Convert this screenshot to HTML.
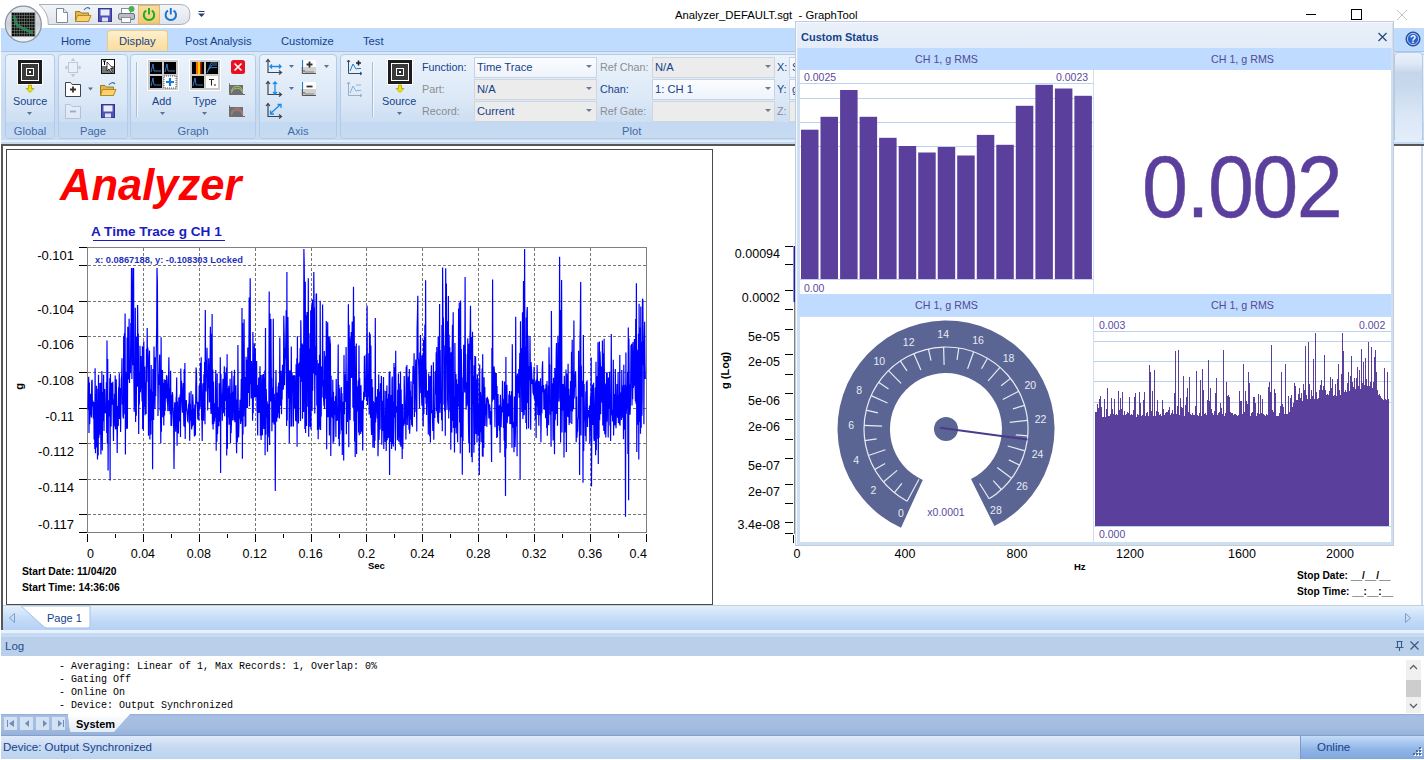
<!DOCTYPE html>
<html><head><meta charset="utf-8">
<style>
*{box-sizing:border-box}
html,body{margin:0;padding:0}
body{width:1426px;height:760px;overflow:hidden;position:relative;background:#fff;font-family:"Liberation Sans",sans-serif;color:#000}
.a{position:absolute}
.t{position:absolute;white-space:pre;line-height:1}
/* ribbon */
.tabstrip{left:1px;top:28px;width:1423px;height:24px;background:#bfdbfd}
.tab{color:#15428b;font-size:11.2px;top:36px}
.ribbon{left:1px;top:51px;width:1423px;height:93px;background:linear-gradient(#dbe8f7 0%,#c8daf0 60%,#c7dbf1 100%);border-top:1px solid #a7c3e6}
.grp{border:1px solid #b2cbe8;border-radius:4px;background:linear-gradient(#ebf3fc 0%,#dde9f7 50%,#d1e1f4 72%,#c9dcf2 100%);}
.grp .lbl{position:absolute;left:0;right:0;bottom:0;height:16px;background:linear-gradient(#c3d9f1,#c7dcf3);color:#4169a6;font-size:11.2px;text-align:center;line-height:18px;border-radius:0 0 3px 3px}
.rb{color:#15428b;font-size:11.2px}
.gr{color:#8d8d8d;font-size:11.2px}
.combo{height:21px;border:1px solid #c4d3e5;background:linear-gradient(#fbfcfe,#eef4fb);font-size:11.2px;color:#15428b;padding:3px 0 0 2px;white-space:pre}
.combo.g{background:#ececec;border-color:#cfd6de}
.dd{position:absolute;width:0;height:0;border-left:3px solid transparent;border-right:3px solid transparent;border-top:3px solid #6b7c91}
/* doc */
.doc{left:6px;top:149px;width:707px;height:456px;border:1px solid #4a4a4a;background:#fff}
.ax{font-size:12.3px;color:#000}
/* custom status */
.cs-hdr{background:#bfdbff;color:#524a94;font-size:10.7px;text-align:center;line-height:22px}
.purple{color:#5b3f9c}
</style></head><body>

<!-- title bar -->
<div class="t" style="left:675px;top:10px;font-size:11.3px;color:#000">Analyzer_DEFAULT.sgt  - GraphTool</div>
<!-- window buttons -->
<div class="a" style="left:1306px;top:14px;width:10px;height:1px;background:#000"></div>
<div class="a" style="left:1351px;top:9px;width:11px;height:11px;border:1px solid #000"></div>
<svg class="a" style="left:1396px;top:9px" width="12" height="12"><path d="M1 1L11 11M11 1L1 11" stroke="#c4c4c4" stroke-width="1"/></svg>

<!-- tab strip -->
<div class="a tabstrip"></div>
<div class="a" style="left:107px;top:30px;width:61px;height:23px;border:1px solid #e7c988;border-bottom:none;border-radius:4px 4px 0 0;background:linear-gradient(#fdf0cf,#fbe3a8 60%,#f5dba6)"></div>
<div class="t tab" style="left:61px">Home</div>
<div class="t tab" style="left:119px">Display</div>
<div class="t tab" style="left:185px">Post Analysis</div>
<div class="t tab" style="left:281px">Customize</div>
<div class="t tab" style="left:363px">Test</div>

<!-- ribbon body -->
<div class="a ribbon"></div>
<div class="a grp" style="left:5px;top:54px;width:50px;height:85px"><div class="lbl">Global</div></div>
<div class="a grp" style="left:58px;top:54px;width:70px;height:85px"><div class="lbl">Page</div></div>
<div class="a grp" style="left:130px;top:54px;width:126px;height:85px"><div class="lbl">Graph</div></div>
<div class="a grp" style="left:259px;top:54px;width:78px;height:85px"><div class="lbl">Axis</div></div>
<div class="a grp" style="left:340px;top:54px;width:1100px;height:85px"><div class="lbl" style="text-align:left;padding-left:281px">Plot</div></div>

<!-- app orb + QAT -->
<svg class="a" style="left:0;top:0" width="220" height="52">
  <defs>
    <linearGradient id="qg" x1="0" y1="0" x2="0" y2="1"><stop offset="0" stop-color="#f3f5f8"/><stop offset="1" stop-color="#dfe4eb"/></linearGradient>
    <linearGradient id="orb" x1="0" y1="0" x2="0" y2="1"><stop offset="0" stop-color="#e9edf2"/><stop offset="0.5" stop-color="#c9d0d9"/><stop offset="1" stop-color="#f4f6f9"/></linearGradient>
    <linearGradient id="hl" x1="0" y1="0" x2="0" y2="1"><stop offset="0" stop-color="#fbdca0"/><stop offset="1" stop-color="#f2c77a"/></linearGradient>
  </defs>
  <path d="M39 4.5H180Q190 4.5 190 14.5Q190 24.5 180 24.5H48.3A25 25 0 0 0 39 4.5Z" fill="url(#qg)" stroke="#a9b1bc"/>
  <rect x="138.5" y="5.5" width="21" height="18.5" fill="url(#hl)" stroke="#e0b96a"/>
  <!-- new doc -->
  <path d="M56.5 8.5H63.5L67.5 12.5V22.5H56.5Z" fill="#fff" stroke="#7c8aa0"/>
  <path d="M63.5 8.5V12.5H67.5" fill="#e4e8ef" stroke="#7c8aa0"/>
  <!-- open folder -->
  <path d="M75.5 11.5H80L81.5 13H88.5V21.5H75.5Z" fill="#e6b548" stroke="#9b7a2a"/>
  <path d="M77.5 15.5H91L88.5 21.5H75.5Z" fill="#fbd36a" stroke="#b08a30"/>
  <path d="M84 10Q87 6 90 9" fill="none" stroke="#3b6fb5" stroke-width="1.2"/>
  <!-- save -->
  <rect x="98.5" y="8.5" width="13" height="13" fill="#5052b8" stroke="#35378a"/>
  <rect x="100.5" y="9.5" width="9" height="6" fill="#e8ecf8"/>
  <rect x="102" y="17.5" width="6" height="4" fill="#dfe3f3"/>
  <!-- print -->
  <rect x="121.5" y="8.5" width="9" height="5" fill="#fff" stroke="#8a8f98"/>
  <rect x="118.5" y="13.5" width="16" height="6" rx="1.5" fill="#b8bdc6" stroke="#6c717a"/>
  <rect x="121.5" y="17.5" width="9" height="5" fill="#fff" stroke="#8a8f98"/>
  <circle cx="131.5" cy="9" r="3" fill="#4caf50"/>
  <!-- power green -->
  <path d="M146.2 10.5A5.2 5.2 0 1 0 151.8 10.5" fill="none" stroke="#19b01a" stroke-width="2"/>
  <path d="M149 8V14.5" stroke="#19b01a" stroke-width="1.9"/>
  <!-- power blue -->
  <path d="M168 10.5A5.2 5.2 0 1 0 173.6 10.5" fill="none" stroke="#1a73d0" stroke-width="2"/>
  <path d="M170.8 8V14.5" stroke="#1a73d0" stroke-width="1.9"/>
  <!-- qat customize -->
  <path d="M198.5 11.5H204.5" stroke="#253f70"/>
  <path d="M198 13.5H205L201.5 17Z" fill="#253f70"/>
  <!-- orb -->
  <circle cx="23.3" cy="24.2" r="18" fill="url(#orb)" stroke="#8a929c" stroke-width="1.2"/>
  <rect x="11.5" y="12.5" width="23.5" height="24" fill="#0a0d0b" stroke="#9a9a9a"/>
  <path d="M12 15.5H35M12 18.5H35M12 21.5H35M12 24.5H35M12 27.5H35M12 30.5H35M12 33.5H35M14.5 13V36M17 13V36M19.5 13V36M22 13V36M24.5 13V36M27 13V36M29.5 13V36M32 13V36" stroke="#7d8380" stroke-width="0.6"/>
  <path d="M14 16L17 25L22 28L26 30L33 33" fill="none" stroke="#2f8f5c" stroke-width="3" opacity="0.85"/>
</svg>

<!-- help icon -->
<svg class="a" style="left:1405px;top:31px" width="16" height="16">
  <circle cx="8" cy="8" r="7" fill="#2c63c9" stroke="#1b3f8c"/>
  <circle cx="8" cy="8" r="5.6" fill="none" stroke="#bfd3f5" stroke-width="0.9"/>
  <text x="8" y="12" font-size="10" font-weight="bold" fill="#fff" text-anchor="middle" font-family="Liberation Sans">?</text>
</svg>

<!-- ribbon icons -->
<svg class="a" style="left:0;top:52px" width="800" height="92">
  <g transform="translate(0,-52)">
  <!-- Global: source icon -->
  <rect x="17" y="59" width="26" height="26" fill="#fff"/>
  <rect x="18" y="60" width="24" height="24" fill="#1d1d1d"/>
  <rect x="21" y="63" width="18" height="18" fill="#fff"/>
  <rect x="22" y="64" width="16" height="16" fill="#3a3a3a"/>
  <rect x="26" y="68" width="8" height="8" fill="#fff"/>
  <rect x="27" y="69" width="6" height="6" fill="#333"/>
  <rect x="29" y="71" width="2" height="2" fill="#fff"/>
  <path d="M28.5 85H31.5V88.5H34L30 92.5L26 88.5H28.5Z" fill="#f2e600" stroke="#8f8a00" stroke-width="0.6"/>
  <path d="M27 112H32L29.5 115Z" fill="#5a7299"/>

  <!-- Page group -->
  <g opacity="0.45" stroke="#8b98ab" fill="none">
    <rect x="68.5" y="62.5" width="9" height="10" fill="#eef2f8"/>
    <path d="M73 58.5L71.5 60.5H74.5Z M73 76.5L71.5 74.5H74.5Z M65 67.5L67 66V69Z M81 67.5L79 66V69Z" fill="#8b98ab"/>
  </g>
  <rect x="101.5" y="59.5" width="13" height="14" fill="#777" stroke="#111"/>
  <rect x="102" y="60" width="12" height="6" fill="#fff"/>
  <path d="M103 61H106M104.5 61V65" stroke="#000" stroke-width="1"/>
  <path d="M107 62V71L109 69L111 72.5L112.3 71.8L110.5 68.5H113Z" fill="#fff" stroke="#000" stroke-width="0.7"/>
  <path d="M65.5 82.5H70.5L72 84.5H80.5V96.5H65.5Z" fill="#fff" stroke="#3a4250"/>
  <path d="M73 86.5V92.5M70 89.5H76" stroke="#333" stroke-width="1.8"/>
  <path d="M88 87.5H93L90.5 90.5Z" fill="#5a7299"/>
  <path d="M100.5 85.5H105L106.5 87H113.5V95.5H100.5Z" fill="#e6b548" stroke="#9b7a2a"/>
  <path d="M102.5 89.5H116L113.5 95.5H100.5Z" fill="#fbd36a" stroke="#b08a30"/>
  <path d="M109 85Q112 81 115 84" fill="none" stroke="#3b6fb5" stroke-width="1.2"/>
  <g opacity="0.4">
    <path d="M65.5 104.5H70.5L72 106.5H80.5V118.5H65.5Z" fill="#f4f7fb" stroke="#8792a3"/>
    <path d="M70 111.5H76" stroke="#555" stroke-width="1.8"/>
  </g>
  <rect x="101.5" y="104.5" width="13" height="13" fill="#5052b8" stroke="#35378a"/>
  <rect x="103.5" y="105.5" width="9" height="6" fill="#e8ecf8"/>
  <rect x="105" y="113.5" width="6" height="4" fill="#dfe3f3"/>

  <!-- Graph group -->
  <path d="M136.5 62V117" stroke="#a9bdd6"/>
  <path d="M137.5 62V117" stroke="#f4f8fc"/>
  <rect x="147" y="59" width="32" height="32" fill="#fff"/>
  <rect x="148" y="60" width="30" height="30" fill="#c9c9c9"/>
  <rect x="150" y="62" width="12" height="12" fill="#000"/>
  <rect x="164" y="62" width="12" height="12" fill="#000"/>
  <rect x="150" y="76" width="12" height="12" fill="#000"/>
  <rect x="164" y="76" width="12" height="12" fill="#fff" stroke="#333" stroke-dasharray="1 1" stroke-width="0.8"/>
  <path d="M151 72L153 64L154 71H161M165 72L167 64L168 71H175M151 86L153 78L154 85H161" fill="none" stroke="#3d86d6" stroke-width="0.9"/>
  <path d="M170 78V86M166 82H174" stroke="#1d7bd8" stroke-width="2.2"/>
  <path d="M160 112H165L162.5 115Z" fill="#5a7299"/>

  <rect x="189" y="59" width="32" height="32" fill="#fff"/>
  <rect x="190" y="60" width="30" height="30" fill="#c9c9c9"/>
  <rect x="192" y="62" width="12" height="12" fill="#000"/>
  <rect x="196" y="62" width="2" height="12" fill="#ff6a00"/>
  <rect x="198" y="62" width="2" height="12" fill="#ffd000"/>
  <rect x="200" y="62" width="1.5" height="12" fill="#c02000"/>
  <rect x="206" y="62" width="12" height="12" fill="#000"/>
  <path d="M207 73L211 63H217M208 70.5L212 65H217M209 68L213 67.5H217" fill="none" stroke="#3d86d6" stroke-width="0.9"/>
  <rect x="192" y="76" width="12" height="12" fill="#000"/>
  <path d="M193 86L195 78L196 85H203" fill="none" stroke="#3d86d6" stroke-width="0.9"/>
  <rect x="206" y="76" width="12" height="12" fill="#fff"/>
  <path d="M209 79.5H214M211.5 79.5V85.5M214 85H216" stroke="#222" stroke-width="1.1"/>
  <path d="M202 112H207L204.5 115Z" fill="#5a7299"/>

  <rect x="231" y="60" width="14" height="14" rx="2.5" fill="#e81123"/>
  <path d="M234.5 63.5L241.5 70.5M241.5 63.5L234.5 70.5" stroke="#fff" stroke-width="1.6"/>
  <path d="M229.5 83.5V94.5H245" fill="none" stroke="#6d6d6d"/>
  <rect x="230" y="85" width="13" height="9" fill="#6b6e73"/>
  <path d="M231 91Q233 86 237 86Q241 86 243 91M231 93Q233 88 237 88Q241 88 243 93" fill="none" stroke="#b4cf4e" stroke-width="0.9"/>
  <path d="M229.5 105.5V116.5H245" fill="none" stroke="#6d6d6d"/>
  <rect x="230" y="107" width="13" height="9" fill="#6b6e73"/>
  <path d="M231 113Q233 108 237 108Q241 108 243 113M231 115Q233 110 237 110Q241 110 243 115" fill="none" stroke="#c87b6f" stroke-width="0.9"/>

  <!-- Axis group -->
  <g fill="none" stroke="#3c4450" stroke-width="1.2">
    <path d="M268 60V72.5H281M266 62L268 59.5L270 62M279 70.5L281.5 72.5L279 74.5"/>
    <path d="M268 82V94.5H281M266 84L268 81.5L270 84M279 92.5L281.5 94.5L279 96.5"/>
    <path d="M268 104V116.5H281M266 106L268 103.5L270 106M279 114.5L281.5 116.5L279 118.5"/>
  </g>
  <g fill="none" stroke="#1d8ae6" stroke-width="1.3">
    <path d="M270 66.5H281M272 64.5L270 66.5L272 68.5M279 64.5L281 66.5L279 68.5"/>
    <path d="M275 82V94M273 84L275 82L277 84M273 92L275 94L277 92"/>
    <path d="M270 114L281 104M270.5 110.5V114H274M277.5 104.5H281V108"/>
  </g>
  <path d="M289 65H294L291.5 68Z" fill="#5a7299"/>
  <path d="M289 87H294L291.5 90Z" fill="#5a7299"/>
  <rect x="301" y="60" width="15" height="14" fill="#fff"/>
  <rect x="301" y="67" width="15" height="7" fill="#d0d0d0"/>
  <path d="M302.5 60V73.5H316" fill="none" stroke="#555" stroke-width="1"/>
  <path d="M302.5 60V67" stroke="#1d7bd8" stroke-width="1.2"/>
  <path d="M303 72L304 70L305 72H314" fill="none" stroke="#666" stroke-width="0.7"/>
  <path d="M309.5 61.5V67.5M306.5 64.5H312.5" stroke="#333" stroke-width="1.8"/>
  <path d="M324 65H329L326.5 68Z" fill="#5a7299"/>
  <rect x="301" y="82" width="15" height="14" fill="#fff"/>
  <rect x="301" y="89" width="15" height="7" fill="#d0d0d0"/>
  <path d="M302.5 82V95.5H316" fill="none" stroke="#555" stroke-width="1"/>
  <path d="M302.5 82V89" stroke="#1d7bd8" stroke-width="1.2"/>
  <path d="M303 94L304 92L305 94H314" fill="none" stroke="#666" stroke-width="0.7"/>
  <path d="M306.5 86.5H312.5" stroke="#333" stroke-width="1.8"/>

  <!-- Plot group -->
  <g fill="none" stroke="#3a4a60" stroke-width="1">
    <path d="M348.5 60V73.5H362M347 62L348.5 60L350 62M360 72L362 73.5L360 75"/>
    <path d="M350 71L353 64L356 69L358 68.5H361" stroke="#1d7bd8"/>
  </g>
  <path d="M358.5 60.5V65.5M356 63H361" stroke="#222" stroke-width="1.6"/>
  <g fill="none" stroke="#8aa0bb" stroke-width="1" opacity="0.8">
    <path d="M348.5 82V95.5H362M347 84L348.5 82L350 84M360 94L362 95.5L360 97"/>
    <path d="M350 93L353 86L356 91L358 90.5H361" stroke="#6aa4e0"/>
    <path d="M356 85H361"/>
  </g>
  <path d="M372.5 62V117" stroke="#a9bdd6"/>
  <path d="M373.5 62V117" stroke="#f4f8fc"/>
  <rect x="387" y="59" width="26" height="26" fill="#fff"/>
  <rect x="388" y="60" width="24" height="24" fill="#1d1d1d"/>
  <rect x="391" y="63" width="18" height="18" fill="#fff"/>
  <rect x="392" y="64" width="16" height="16" fill="#3a3a3a"/>
  <rect x="396" y="68" width="8" height="8" fill="#fff"/>
  <rect x="397" y="69" width="6" height="6" fill="#333"/>
  <rect x="399" y="71" width="2" height="2" fill="#fff"/>
  <path d="M398.5 85H401.5V88.5H404L400 92.5L396 88.5H398.5Z" fill="#f2e600" stroke="#8f8a00" stroke-width="0.6"/>
  <path d="M397 112H402L399.5 115Z" fill="#5a7299"/>
  </g>
</svg>

<!-- ribbon texts -->
<div class="t rb" style="left:13px;top:96px;font-size:10.8px">Source</div>
<div class="t rb" style="left:152px;top:96px;font-size:10.8px">Add</div>
<div class="t rb" style="left:193px;top:96px;font-size:10.8px">Type</div>
<div class="t rb" style="left:382px;top:96px;font-size:10.8px">Source</div>

<div class="t rb" style="left:422px;top:62px;font-size:10.8px">Function:</div>
<div class="t gr" style="left:422px;top:84px;font-size:10.8px">Part:</div>
<div class="t gr" style="left:422px;top:106px;font-size:10.8px">Record:</div>
<div class="t gr" style="left:600px;top:62px;font-size:10.8px">Ref Chan:</div>
<div class="t rb" style="left:600px;top:84px;font-size:10.8px">Chan:</div>
<div class="t gr" style="left:600px;top:106px;font-size:10.8px">Ref Gate:</div>
<div class="t rb" style="left:777px;top:62px;font-size:10.8px">X:</div>
<div class="t rb" style="left:777px;top:84px;font-size:10.8px">Y:</div>
<div class="t gr" style="left:777px;top:106px;font-size:10.8px">Z:</div>

<div class="a combo" style="left:474px;top:57px;width:123px">Time Trace</div>
<div class="a combo g" style="left:474px;top:79px;width:123px">N/A</div>
<div class="a combo g" style="left:474px;top:101px;width:123px">Current</div>
<div class="a combo g" style="left:652px;top:57px;width:123px">N/A</div>
<div class="a combo" style="left:652px;top:79px;width:123px">1: CH 1</div>
<div class="a combo g" style="left:652px;top:101px;width:123px"></div>
<div class="a combo" style="left:789px;top:57px;width:30px">S</div>
<div class="a combo" style="left:789px;top:79px;width:30px">g</div>
<div class="a combo g" style="left:789px;top:101px;width:30px"></div>
<div class="dd" style="left:586px;top:65px"></div>
<div class="dd" style="left:586px;top:87px"></div>
<div class="dd" style="left:586px;top:109px"></div>
<div class="dd" style="left:765px;top:65px"></div>
<div class="dd" style="left:765px;top:87px"></div>
<div class="dd" style="left:765px;top:109px"></div>

<!-- right ribbon end -->
<div class="a" style="left:1394px;top:52px;width:29px;height:90px;border:1px solid #b2cbe8;border-radius:4px;background:linear-gradient(#e8f0fb 0%,#dfe9f6 12%,#c6d6ea 22%,#c9d9ed 40%,#d9e6f5 70%,#e3eefa 100%)"></div>


<!-- MDI area -->
<div class="a" style="left:1px;top:140px;width:1423px;height:2px;background:#e3eefb"></div>
<div class="a" style="left:1px;top:142px;width:1423px;height:2px;background:#c5d9f1"></div>
<div class="a" style="left:1px;top:144px;width:1423px;height:2px;background:#575757"></div>
<div class="a" style="left:1px;top:144px;width:2px;height:486px;background:#575757"></div>
<div class="a" style="left:1421px;top:146px;width:2px;height:484px;background:#c9d8ea"></div>
<div class="a doc"></div>
<div class="t" style="left:60px;top:163.5px;font-size:43.5px;font-weight:bold;font-style:italic;color:#f00">Analyzer</div>
<div class="t" style="left:91px;top:225px;font-size:13.6px;font-weight:bold;color:#1b1bc0">A Time Trace g CH 1</div>
<div class="a" style="left:93px;top:240px;width:132px;height:1px;background:#1b1bc0"></div>
<div class="a" style="left:87px;top:247px;width:560px;height:286px;border:1px solid #808080"></div>
<svg class="a" style="left:0;top:0" width="713" height="605"><path d="M88 265.5H646" stroke="#777" stroke-dasharray="3 2" stroke-width="1"/><path d="M88 301.5H646" stroke="#777" stroke-dasharray="3 2" stroke-width="1"/><path d="M88 336.5H646" stroke="#777" stroke-dasharray="3 2" stroke-width="1"/><path d="M88 372.5H646" stroke="#777" stroke-dasharray="3 2" stroke-width="1"/><path d="M88 408.5H646" stroke="#777" stroke-dasharray="3 2" stroke-width="1"/><path d="M88 443.5H646" stroke="#777" stroke-dasharray="3 2" stroke-width="1"/><path d="M88 479.5H646" stroke="#777" stroke-dasharray="3 2" stroke-width="1"/><path d="M88 514.5H646" stroke="#777" stroke-dasharray="3 2" stroke-width="1"/><path d="M143.5 248V532" stroke="#777" stroke-dasharray="3 2" stroke-width="1"/><path d="M199.5 248V532" stroke="#777" stroke-dasharray="3 2" stroke-width="1"/><path d="M255.5 248V532" stroke="#777" stroke-dasharray="3 2" stroke-width="1"/><path d="M311.5 248V532" stroke="#777" stroke-dasharray="3 2" stroke-width="1"/><path d="M366.5 248V532" stroke="#777" stroke-dasharray="3 2" stroke-width="1"/><path d="M422.5 248V532" stroke="#777" stroke-dasharray="3 2" stroke-width="1"/><path d="M478.5 248V532" stroke="#777" stroke-dasharray="3 2" stroke-width="1"/><path d="M534.5 248V532" stroke="#777" stroke-dasharray="3 2" stroke-width="1"/><path d="M590.5 248V532" stroke="#777" stroke-dasharray="3 2" stroke-width="1"/><path d="M88.0 409.7 88.3 394.5 88.7 376.7 89.0 432.9 89.4 382.6 89.7 424.3 90.0 410.1 90.4 415.3 90.7 393.8 91.1 410.9 91.4 417.5 91.7 381.5 92.1 379.8 92.4 406.4 92.8 400.6 93.1 414.4 93.4 418.8 93.8 401.9 94.1 439.5 94.5 412.2 94.8 449.1 95.1 368.3 95.5 453.2 95.8 394.2 96.2 447.5 96.5 385.8 96.8 439.4 97.2 408.9 97.5 459.6 97.9 388.7 98.2 455.5 98.5 374.8 98.9 437.8 99.2 383.1 99.6 427.9 99.9 417.0 100.2 434.8 100.6 382.7 100.9 454.5 101.3 404.4 101.6 419.6 101.9 370.9 102.3 450.6 102.6 392.0 103.0 394.2 103.3 421.2 103.6 374.7 104.0 430.9 104.3 389.7 104.7 389.7 105.0 413.4 105.3 408.0 105.7 411.0 106.0 412.8 106.4 382.2 106.7 432.9 107.0 340.4 107.4 443.7 107.7 359.1 108.1 470.5 108.4 400.2 108.7 405.7 109.1 415.2 109.4 416.3 109.8 378.2 110.1 480.5 110.4 374.0 110.8 407.4 111.1 426.4 111.5 382.7 111.8 390.3 112.1 392.7 112.5 404.7 112.8 381.8 113.2 416.9 113.5 441.0 113.8 399.4 114.2 414.8 114.5 393.7 114.9 426.4 115.2 375.5 115.5 429.3 115.9 428.3 116.2 379.3 116.6 397.9 116.9 419.0 117.2 452.9 117.6 411.8 117.9 405.9 118.3 426.0 118.6 387.6 118.9 398.0 119.3 373.3 119.6 418.9 120.0 406.2 120.3 388.0 120.6 431.9 121.0 394.2 121.3 379.1 121.7 375.7 122.0 358.3 122.3 404.5 122.7 396.1 123.0 415.4 123.4 418.5 123.7 336.1 124.0 414.2 124.4 333.2 124.7 379.9 125.1 313.6 125.4 454.5 125.7 371.7 126.1 387.5 126.4 408.8 126.8 429.1 127.1 337.4 127.4 428.5 127.8 326.8 128.1 354.6 128.5 362.3 128.8 379.6 129.1 318.7 129.5 383.1 129.8 359.8 130.2 364.7 130.5 373.2 130.8 322.9 131.2 347.4 131.5 268.0 131.9 378.9 132.2 268.0 132.5 353.0 132.9 365.3 133.2 310.7 133.6 268.0 133.9 378.0 134.2 411.8 134.6 369.1 134.9 406.2 135.3 307.7 135.6 421.9 135.9 337.8 136.3 415.8 136.6 336.6 137.0 382.4 137.3 386.7 137.6 305.1 138.0 351.2 138.3 333.8 138.7 433.9 139.0 371.7 139.3 404.6 139.7 384.6 140.0 345.7 140.4 392.3 140.7 376.8 141.0 356.1 141.4 388.8 141.7 385.4 142.1 401.5 142.4 346.2 142.7 429.1 143.1 347.0 143.4 430.8 143.8 341.2 144.1 407.1 144.4 381.6 144.8 366.6 145.1 415.3 145.5 400.6 145.8 381.7 146.1 414.0 146.5 349.0 146.8 382.0 147.2 327.9 147.5 367.3 147.8 347.6 148.2 357.5 148.5 435.8 148.9 372.7 149.2 396.6 149.5 350.6 149.9 439.6 150.2 389.1 150.6 390.1 150.9 434.5 151.2 364.9 151.6 420.6 151.9 397.1 152.3 391.8 152.6 469.3 152.9 368.9 153.3 403.1 153.6 419.9 154.0 346.5 154.3 384.4 154.6 367.1 155.0 409.1 155.3 357.2 155.7 396.3 156.0 363.8 156.3 353.1 156.7 327.2 157.0 268.0 157.4 283.2 157.7 350.8 158.0 415.9 158.4 374.3 158.7 377.4 159.1 384.9 159.4 363.5 159.7 354.5 160.1 410.5 160.4 393.3 160.8 443.2 161.1 337.3 161.4 431.7 161.8 370.2 162.1 381.3 162.5 369.9 162.8 417.3 163.1 382.7 163.5 399.0 163.8 425.6 164.2 379.3 164.5 415.6 164.8 384.9 165.2 411.1 165.5 380.0 165.9 387.3 166.2 398.6 166.5 375.3 166.9 376.6 167.2 400.9 167.6 403.7 167.9 411.3 168.2 384.9 168.6 374.9 168.9 357.2 169.3 410.9 169.6 395.3 169.9 388.1 170.3 414.2 170.6 370.8 171.0 425.8 171.3 395.1 171.6 426.1 172.0 412.9 172.3 392.2 172.7 395.1 173.0 408.3 173.3 411.0 173.7 429.1 174.0 468.9 174.4 424.8 174.7 402.2 175.0 405.8 175.4 412.2 175.7 431.7 176.1 398.1 176.4 396.4 176.7 377.4 177.1 445.7 177.4 401.5 177.8 433.3 178.1 408.6 178.4 433.6 178.8 397.5 179.1 398.7 179.5 415.9 179.8 421.5 180.1 394.5 180.5 437.0 180.8 368.5 181.2 396.0 181.5 380.8 181.8 400.0 182.2 409.2 182.5 412.7 182.9 389.1 183.2 383.0 183.5 407.3 183.9 426.2 184.2 369.3 184.6 427.1 184.9 363.1 185.2 439.0 185.6 403.7 185.9 410.9 186.3 400.1 186.6 408.2 186.9 409.7 187.3 414.6 187.6 420.8 188.0 421.5 188.3 412.0 188.6 403.7 189.0 407.2 189.3 392.4 189.7 440.7 190.0 404.3 190.3 420.7 190.7 418.5 191.0 390.9 191.4 421.3 191.7 429.5 192.0 410.2 192.4 426.4 192.7 394.3 193.1 402.5 193.4 417.9 193.7 425.3 194.1 409.2 194.4 436.5 194.8 404.5 195.1 430.8 195.4 435.5 195.8 389.3 196.1 367.6 196.5 373.9 196.8 403.8 197.1 401.3 197.5 408.5 197.8 419.6 198.2 405.6 198.5 402.1 198.8 420.5 199.2 385.4 199.5 409.1 199.9 384.2 200.2 407.4 200.5 362.7 200.9 394.3 201.2 357.2 201.6 419.9 201.9 418.2 202.2 441.1 202.6 394.4 202.9 383.3 203.3 396.1 203.6 420.7 203.9 374.3 204.3 412.1 204.6 362.0 205.0 424.2 205.3 310.0 205.6 372.4 206.0 391.5 206.3 360.0 206.7 377.7 207.0 347.7 207.3 369.2 207.7 410.4 208.0 370.7 208.4 387.7 208.7 358.2 209.0 375.5 209.4 402.5 209.7 396.8 210.1 358.4 210.4 326.8 210.7 406.6 211.1 413.9 211.4 333.7 211.8 410.9 212.1 314.0 212.4 424.4 212.8 369.4 213.1 429.6 213.5 381.5 213.8 423.9 214.1 404.5 214.5 421.6 214.8 403.2 215.2 417.8 215.5 388.9 215.8 370.0 216.2 450.7 216.5 389.3 216.9 441.8 217.2 373.5 217.5 434.2 217.9 421.0 218.2 407.3 218.6 408.3 218.9 426.3 219.2 383.3 219.6 421.7 219.9 414.7 220.3 357.3 220.6 473.0 220.9 373.7 221.3 392.5 221.6 403.1 222.0 405.7 222.3 420.8 222.6 395.2 223.0 378.7 223.3 413.3 223.7 397.1 224.0 410.4 224.3 366.2 224.7 416.3 225.0 373.0 225.4 401.1 225.7 385.2 226.0 400.7 226.4 367.4 226.7 455.5 227.1 354.2 227.4 448.8 227.7 397.1 228.1 388.0 228.4 417.4 228.8 385.8 229.1 424.8 229.4 400.2 229.8 417.5 230.1 378.8 230.5 442.9 230.8 393.6 231.1 433.3 231.5 421.0 231.8 370.8 232.2 393.6 232.5 412.1 232.8 420.6 233.2 391.8 233.5 410.5 233.9 375.8 234.2 420.3 234.5 369.7 234.9 422.2 235.2 391.0 235.6 401.4 235.9 385.3 236.2 430.5 236.6 453.2 236.9 399.6 237.3 442.3 237.6 427.6 237.9 344.9 238.3 413.5 238.6 437.5 239.0 421.2 239.3 410.6 239.6 418.7 240.0 399.7 240.3 408.4 240.7 424.1 241.0 399.5 241.3 378.9 241.7 421.5 242.0 308.0 242.4 458.8 242.7 322.9 243.0 434.6 243.4 344.3 243.7 416.4 244.1 319.2 244.4 401.2 244.7 378.5 245.1 427.0 245.4 377.1 245.8 426.1 246.1 356.7 246.4 408.2 246.8 387.0 247.1 359.7 247.5 407.9 247.8 347.4 248.1 362.7 248.5 393.1 248.8 372.7 249.2 297.5 249.5 406.2 249.8 346.8 250.2 278.3 250.5 384.2 250.9 365.8 251.2 398.4 251.5 360.9 251.9 386.1 252.2 373.4 252.6 420.7 252.9 332.0 253.2 413.3 253.6 375.1 253.9 388.4 254.3 343.2 254.6 396.2 254.9 397.5 255.3 348.5 255.6 397.5 256.0 368.5 256.3 396.7 256.6 361.0 257.0 410.8 257.3 411.9 257.7 435.5 258.0 384.9 258.3 408.7 258.7 377.6 259.0 412.9 259.4 403.6 259.7 389.9 260.0 366.2 260.4 435.8 260.7 375.1 261.1 440.1 261.4 421.9 261.7 398.3 262.1 374.8 262.4 435.3 262.8 405.7 263.1 413.7 263.4 373.9 263.8 429.1 264.1 377.9 264.5 417.7 264.8 370.6 265.1 455.3 265.5 328.1 265.8 434.8 266.2 388.9 266.5 401.0 266.8 417.4 267.2 401.5 267.5 451.8 267.9 404.0 268.2 437.3 268.5 426.6 268.9 401.5 269.2 291.4 269.6 444.9 269.9 313.5 270.2 390.8 270.6 401.6 270.9 318.9 271.3 377.3 271.6 378.5 271.9 431.3 272.3 401.3 272.6 387.6 273.0 422.5 273.3 318.8 273.6 395.7 274.0 424.6 274.3 393.8 274.7 415.1 275.0 411.1 275.3 491.0 275.7 387.7 276.0 370.1 276.4 415.1 276.7 421.8 277.0 400.9 277.4 392.5 277.7 417.8 278.1 386.3 278.4 412.9 278.7 382.6 279.1 411.1 279.4 418.6 279.8 337.6 280.1 390.8 280.4 405.8 280.8 394.8 281.1 370.8 281.5 414.2 281.8 387.2 282.1 399.5 282.5 364.7 282.8 384.6 283.2 389.6 283.5 385.5 283.8 315.8 284.2 335.8 284.5 385.2 284.9 362.5 285.2 348.2 285.5 358.6 285.9 331.7 286.2 310.3 286.6 426.0 286.9 271.9 287.2 420.4 287.6 342.2 287.9 316.9 288.3 357.8 288.6 398.5 288.9 370.7 289.3 443.1 289.6 388.3 290.0 370.3 290.3 391.4 290.6 386.3 291.0 426.8 291.3 346.6 291.7 426.3 292.0 371.9 292.3 390.3 292.7 382.1 293.0 375.4 293.4 426.6 293.7 397.6 294.0 375.0 294.4 408.2 294.7 375.5 295.1 405.3 295.4 402.2 295.7 421.0 296.1 364.3 296.4 421.5 296.8 358.3 297.1 446.8 297.4 336.3 297.8 392.8 298.1 381.1 298.5 423.4 298.8 363.5 299.1 372.3 299.5 362.2 299.8 376.5 300.2 348.1 300.5 421.1 300.8 320.3 301.2 347.7 301.5 344.8 301.9 382.0 302.2 343.4 302.5 418.8 302.9 344.8 303.2 378.6 303.6 412.1 303.9 249.0 304.2 264.8 304.6 304.6 304.9 429.0 305.3 281.8 305.6 432.9 305.9 315.2 306.3 331.7 306.6 426.1 307.0 312.0 307.3 388.1 307.6 319.4 308.0 406.7 308.3 278.2 308.7 436.8 309.0 333.3 309.3 407.5 309.7 348.5 310.0 426.8 310.4 402.1 310.7 310.3 311.0 429.4 311.4 318.7 311.7 305.2 312.1 411.1 312.4 299.5 312.7 390.7 313.1 346.3 313.4 373.5 313.8 272.1 314.1 308.3 314.4 307.3 314.8 413.6 315.1 346.2 315.5 373.5 315.8 375.2 316.1 294.5 316.5 293.5 316.8 405.5 317.2 359.9 317.5 430.1 317.8 371.2 318.2 439.2 318.5 363.3 318.9 408.7 319.2 429.4 319.5 354.7 319.9 426.4 320.2 300.8 320.6 429.9 320.9 371.9 321.2 416.4 321.6 366.4 321.9 370.1 322.3 386.3 322.6 304.4 322.9 397.4 323.3 380.0 323.6 398.7 324.0 406.2 324.3 351.1 324.6 408.9 325.0 371.7 325.3 367.5 325.7 355.8 326.0 398.8 326.3 320.9 326.7 449.2 327.0 330.1 327.4 359.4 327.7 322.3 328.0 417.3 328.4 336.4 328.7 365.6 329.1 402.2 329.4 435.4 329.7 336.9 330.1 342.1 330.4 345.1 330.8 455.9 331.1 375.7 331.4 416.7 331.8 406.9 332.1 397.6 332.5 418.2 332.8 379.8 333.1 443.7 333.5 391.8 333.8 441.5 334.2 415.1 334.5 401.1 334.8 414.8 335.2 409.6 335.5 395.9 335.9 436.9 336.2 379.1 336.5 411.3 336.9 420.9 337.2 408.0 337.6 420.3 337.9 383.7 338.2 344.5 338.6 438.9 338.9 384.8 339.3 446.2 339.6 388.2 339.9 434.3 340.3 405.5 340.6 411.1 341.0 397.0 341.3 387.0 341.6 430.5 342.0 393.2 342.3 454.9 342.7 401.8 343.0 423.5 343.3 402.1 343.7 460.5 344.0 355.0 344.4 414.2 344.7 385.1 345.0 400.9 345.4 374.2 345.7 401.9 346.1 347.0 346.4 434.3 346.7 380.9 347.1 386.4 347.4 422.0 347.8 381.3 348.1 356.6 348.4 304.3 348.8 447.3 349.1 324.7 349.5 393.3 349.8 337.5 350.1 420.2 350.5 351.5 350.8 360.8 351.2 332.0 351.5 378.1 351.8 353.0 352.2 321.4 352.5 335.6 352.9 407.8 353.2 355.4 353.5 286.8 353.9 421.3 354.2 316.2 354.6 441.5 354.9 346.0 355.2 457.1 355.6 366.7 355.9 419.8 356.3 343.4 356.6 454.1 356.9 387.7 357.3 387.3 357.6 411.6 358.0 389.0 358.3 380.2 358.6 432.4 359.0 345.6 359.3 435.3 359.7 377.9 360.0 398.9 360.3 396.0 360.7 433.9 361.0 385.2 361.4 431.7 361.7 401.9 362.0 409.3 362.4 400.5 362.7 450.5 363.1 401.3 363.4 408.3 363.7 391.8 364.1 399.7 364.4 355.8 364.8 395.5 365.1 397.0 365.4 378.2 365.8 387.6 366.1 354.5 366.5 400.9 366.8 343.4 367.1 305.7 367.5 405.0 367.8 392.7 368.2 396.8 368.5 391.5 368.8 353.3 369.2 414.5 369.5 332.3 369.9 393.7 370.2 334.3 370.5 418.0 370.9 345.6 371.2 424.9 371.6 435.0 371.9 379.1 372.2 403.9 372.6 387.2 372.9 447.6 373.3 401.1 373.6 412.2 373.9 405.4 374.3 447.9 374.6 402.3 375.0 440.7 375.3 318.1 375.6 422.5 376.0 407.0 376.3 396.4 376.7 409.0 377.0 408.9 377.3 418.4 377.7 389.0 378.0 456.2 378.4 436.9 378.7 374.4 379.0 439.9 379.4 425.1 379.7 391.5 380.1 429.5 380.4 383.2 380.7 383.9 381.1 393.4 381.4 375.9 381.8 444.7 382.1 424.5 382.4 400.7 382.8 430.9 383.1 422.9 383.5 376.9 383.8 449.0 384.1 390.6 384.5 432.1 384.8 428.0 385.2 442.1 385.5 426.9 385.8 391.1 386.2 451.0 386.5 428.9 386.9 385.6 387.2 440.3 387.5 398.5 387.9 431.5 388.2 438.0 388.6 394.0 388.9 417.0 389.2 372.5 389.6 475.1 389.9 371.2 390.3 442.1 390.6 399.0 390.9 425.7 391.3 395.0 391.6 449.1 392.0 379.5 392.3 376.5 392.6 444.1 393.0 401.4 393.3 446.6 393.7 420.9 394.0 362.9 394.3 400.5 394.7 417.6 395.0 367.3 395.4 450.5 395.7 350.8 396.0 412.0 396.4 411.7 396.7 406.2 397.1 408.5 397.4 440.3 397.7 389.8 398.1 437.7 398.4 373.6 398.8 441.8 399.1 402.0 399.4 424.4 399.8 383.4 400.1 444.7 400.5 371.5 400.8 446.7 401.1 389.6 401.5 429.5 401.8 405.6 402.2 459.0 402.5 404.1 402.8 448.9 403.2 419.4 403.5 418.6 403.9 425.8 404.2 376.0 404.5 391.2 404.9 406.9 405.2 424.3 405.6 402.6 405.9 439.6 406.2 366.8 406.6 418.4 406.9 365.1 407.3 424.9 407.6 398.4 407.9 415.7 408.3 376.5 408.6 407.6 409.0 429.7 409.3 369.1 409.6 433.7 410.0 425.3 410.3 390.7 410.7 419.4 411.0 381.3 411.3 404.4 411.7 425.1 412.0 396.7 412.4 426.8 412.7 387.3 413.0 366.1 413.4 374.3 413.7 384.1 414.1 353.2 414.4 417.0 414.7 396.2 415.1 412.0 415.4 371.3 415.8 359.5 416.1 399.5 416.4 391.3 416.8 431.5 417.1 330.2 417.5 312.4 417.8 295.7 418.1 358.2 418.5 359.5 418.8 369.1 419.2 388.6 419.5 408.2 419.8 352.5 420.2 386.9 420.5 335.1 420.9 393.1 421.2 355.6 421.5 392.5 421.9 405.8 422.2 371.7 422.6 355.1 422.9 417.6 423.2 426.4 423.6 340.1 423.9 414.0 424.3 337.0 424.6 367.9 424.9 324.4 425.3 397.5 425.6 280.3 426.0 403.8 426.3 369.4 426.6 414.9 427.0 391.4 427.3 399.1 427.7 390.6 428.0 397.9 428.3 434.5 428.7 373.4 429.0 409.7 429.4 380.7 429.7 436.3 430.0 376.1 430.4 442.5 430.7 400.5 431.1 384.2 431.4 365.3 431.7 412.0 432.1 411.4 432.4 411.1 432.8 431.0 433.1 417.5 433.4 362.3 433.8 439.7 434.1 409.3 434.5 407.7 434.8 417.9 435.1 373.3 435.5 371.1 435.8 394.4 436.2 352.3 436.5 410.9 436.8 347.0 437.2 412.1 437.5 413.8 437.9 422.4 438.2 336.5 438.5 423.8 438.9 378.2 439.2 407.6 439.6 303.9 439.9 412.8 440.2 350.0 440.6 403.2 440.9 390.7 441.3 398.2 441.6 420.3 441.9 325.1 442.3 431.2 442.6 267.5 443.0 328.1 443.3 317.4 443.6 335.4 444.0 404.7 444.3 377.6 444.7 411.2 445.0 345.5 445.3 435.7 445.7 268.2 446.0 362.7 446.4 283.5 446.7 364.7 447.0 409.9 447.4 399.6 447.7 321.2 448.1 384.8 448.4 296.0 448.7 418.5 449.1 334.8 449.4 390.4 449.8 347.3 450.1 411.6 450.4 371.5 450.8 449.8 451.1 352.2 451.5 415.1 451.8 432.6 452.1 353.3 452.5 324.8 452.8 420.9 453.2 312.3 453.5 427.9 453.8 396.5 454.2 417.4 454.5 452.4 454.9 343.0 455.2 403.8 455.5 427.7 455.9 373.9 456.2 433.4 456.6 379.2 456.9 420.1 457.2 384.0 457.6 442.2 457.9 397.6 458.3 406.8 458.6 308.6 458.9 393.0 459.3 302.5 459.6 422.5 460.0 351.8 460.3 453.6 460.6 300.4 461.0 437.3 461.3 349.1 461.7 387.1 462.0 377.5 462.3 474.7 462.7 391.8 463.0 441.0 463.4 380.1 463.7 344.8 464.0 376.3 464.4 382.0 464.7 392.6 465.1 277.0 465.4 377.4 465.7 353.9 466.1 409.8 466.4 382.2 466.8 406.0 467.1 403.8 467.4 389.9 467.8 338.2 468.1 378.7 468.5 424.6 468.8 443.1 469.1 343.8 469.5 452.7 469.8 343.7 470.2 329.0 470.5 305.7 470.8 359.7 471.2 357.4 471.5 457.0 471.9 337.0 472.2 462.3 472.5 331.7 472.9 403.5 473.2 375.9 473.6 406.3 473.9 452.7 474.2 365.2 474.6 444.9 474.9 356.0 475.3 421.1 475.6 356.4 475.9 434.0 476.3 379.6 476.6 396.0 477.0 442.4 477.3 374.2 477.6 381.6 478.0 379.9 478.3 435.5 478.7 404.4 479.0 404.0 479.3 474.9 479.7 364.6 480.0 432.3 480.4 392.1 480.7 396.4 481.0 442.2 481.4 401.1 481.7 424.0 482.1 368.4 482.4 456.4 482.7 354.3 483.1 456.7 483.4 385.3 483.8 448.1 484.1 377.3 484.4 426.0 484.8 387.0 485.1 425.9 485.5 403.9 485.8 415.1 486.1 412.8 486.5 397.7 486.8 426.7 487.2 398.5 487.5 398.0 487.8 400.0 488.2 399.9 488.5 402.9 488.9 418.5 489.2 408.5 489.5 404.4 489.9 407.8 490.2 424.7 490.6 411.1 490.9 416.7 491.2 425.9 491.6 461.9 491.9 348.0 492.3 401.5 492.6 279.5 492.9 392.6 493.3 396.5 493.6 399.6 494.0 366.4 494.3 369.7 494.6 379.4 495.0 427.2 495.3 373.1 495.7 390.1 496.0 395.4 496.3 372.9 496.7 438.0 497.0 385.9 497.4 436.9 497.7 398.1 498.0 394.0 498.4 425.7 498.7 412.5 499.1 405.8 499.4 430.8 499.7 404.7 500.1 452.7 500.4 394.7 500.8 407.9 501.1 427.3 501.4 415.1 501.8 406.8 502.1 412.3 502.5 380.8 502.8 411.8 503.1 398.8 503.5 428.0 503.8 399.9 504.2 440.8 504.5 381.4 504.8 456.9 505.2 386.0 505.5 496.0 505.9 356.9 506.2 448.6 506.5 397.0 506.9 384.7 507.2 423.2 507.6 412.2 507.9 412.5 508.2 403.4 508.6 416.4 508.9 394.5 509.3 413.5 509.6 390.9 509.9 424.1 510.3 395.2 510.6 420.3 511.0 423.8 511.3 423.9 511.6 391.3 512.0 447.7 512.3 344.2 512.7 427.2 513.0 424.3 513.3 427.8 513.7 422.0 514.0 452.2 514.4 396.6 514.7 422.2 515.0 447.0 515.4 431.4 515.7 316.7 516.1 426.5 516.4 400.7 516.7 375.5 517.1 456.3 517.4 373.4 517.8 389.0 518.1 384.1 518.4 393.2 518.8 369.0 519.1 397.7 519.5 375.2 519.8 353.0 520.1 479.4 520.5 321.3 520.8 385.7 521.2 348.3 521.5 379.3 521.8 412.0 522.2 364.1 522.5 312.2 522.9 418.9 523.2 380.0 523.5 281.0 523.9 351.7 524.2 415.2 524.6 249.0 524.9 355.1 525.2 410.0 525.6 346.4 525.9 422.9 526.3 317.5 526.6 429.3 526.9 312.0 527.3 307.0 527.6 402.9 528.0 335.4 528.3 369.3 528.6 428.5 529.0 377.2 529.3 366.2 529.7 380.5 530.0 336.1 530.3 370.2 530.7 429.7 531.0 362.1 531.4 367.8 531.7 373.1 532.0 383.9 532.4 379.3 532.7 383.4 533.1 393.6 533.4 379.5 533.7 395.5 534.1 366.7 534.4 399.3 534.8 394.1 535.1 382.4 535.4 419.4 535.8 380.5 536.1 438.0 536.5 379.5 536.8 406.1 537.1 365.0 537.5 381.7 537.8 414.9 538.2 405.9 538.5 381.0 538.8 425.7 539.2 381.3 539.5 415.2 539.9 384.4 540.2 413.8 540.5 378.2 540.9 442.3 541.2 416.4 541.6 386.0 541.9 413.3 542.2 369.9 542.6 361.2 542.9 392.2 543.3 387.4 543.6 385.0 543.9 408.9 544.3 409.1 544.6 396.7 545.0 389.4 545.3 388.8 545.6 418.2 546.0 384.2 546.3 394.3 546.7 428.0 547.0 381.1 547.3 435.7 547.7 399.4 548.0 422.9 548.4 385.5 548.7 425.3 549.0 347.2 549.4 374.9 549.7 364.5 550.1 414.8 550.4 401.4 550.7 406.8 551.1 446.7 551.4 311.0 551.8 392.2 552.1 403.9 552.4 411.4 552.8 383.3 553.1 440.6 553.5 377.8 553.8 414.3 554.1 391.8 554.5 454.3 554.8 368.1 555.2 420.2 555.5 408.9 555.8 413.7 556.2 355.0 556.5 343.0 556.9 414.0 557.2 385.6 557.5 425.7 557.9 335.8 558.2 393.8 558.6 341.9 558.9 401.6 559.2 397.9 559.6 256.8 559.9 334.5 560.3 322.9 560.6 442.6 560.9 309.9 561.3 410.7 561.6 280.0 562.0 432.5 562.3 393.8 562.6 393.0 563.0 384.1 563.3 410.4 563.7 384.9 564.0 457.4 564.3 375.8 564.7 390.4 565.0 432.5 565.4 387.6 565.7 430.4 566.0 369.5 566.4 452.1 566.7 373.6 567.1 386.0 567.4 416.8 567.7 407.0 568.1 363.7 568.4 417.2 568.8 388.7 569.1 424.9 569.4 401.0 569.8 395.5 570.1 422.9 570.5 380.9 570.8 411.1 571.1 406.7 571.5 351.8 571.8 423.9 572.2 339.7 572.5 411.6 572.8 370.9 573.2 394.0 573.5 409.3 573.9 320.5 574.2 398.5 574.5 386.7 574.9 386.8 575.2 377.6 575.6 371.2 575.9 388.2 576.2 442.3 576.6 396.5 576.9 437.8 577.3 430.0 577.6 431.5 577.9 419.6 578.3 416.7 578.6 350.8 579.0 414.7 579.3 389.5 579.6 475.0 580.0 342.4 580.3 323.8 580.7 281.9 581.0 435.4 581.3 365.5 581.7 396.8 582.0 384.2 582.4 380.7 582.7 390.7 583.0 482.8 583.4 334.9 583.7 451.1 584.1 383.9 584.4 412.7 584.7 420.7 585.1 411.5 585.4 436.0 585.8 391.5 586.1 441.6 586.4 381.7 586.8 416.5 587.1 380.2 587.5 427.0 587.8 414.6 588.1 414.9 588.5 410.1 588.8 411.0 589.2 418.2 589.5 405.5 589.8 443.8 590.2 427.5 590.5 396.3 590.9 430.6 591.2 357.4 591.5 486.6 591.9 410.6 592.2 405.0 592.6 384.4 592.9 424.8 593.2 422.9 593.6 382.7 593.9 438.0 594.3 441.1 594.6 427.7 594.9 405.7 595.3 387.4 595.6 455.2 596.0 361.8 596.3 450.2 596.6 376.9 597.0 435.0 597.3 376.1 597.7 438.9 598.0 342.3 598.3 463.9 598.7 366.7 599.0 437.8 599.4 341.4 599.7 420.3 600.0 351.5 600.4 364.4 600.7 414.3 601.1 366.5 601.4 373.8 601.7 381.3 602.1 402.8 602.4 340.4 602.8 425.6 603.1 395.1 603.4 353.3 603.8 431.1 604.1 338.7 604.5 396.6 604.8 434.3 605.1 383.6 605.5 393.5 605.8 437.4 606.2 415.9 606.5 372.5 606.8 421.7 607.2 372.2 607.5 407.7 607.9 392.5 608.2 437.5 608.5 377.4 608.9 403.3 609.2 408.6 609.6 371.8 609.9 425.6 610.2 412.5 610.6 440.9 610.9 405.3 611.3 333.9 611.6 415.2 611.9 410.4 612.3 410.7 612.6 421.4 613.0 407.2 613.3 359.7 613.6 435.5 614.0 400.1 614.3 394.0 614.7 425.5 615.0 411.5 615.3 369.1 615.7 400.8 616.0 428.3 616.4 413.1 616.7 410.9 617.0 384.1 617.4 413.3 617.7 418.0 618.1 371.9 618.4 423.0 618.7 409.5 619.1 395.2 619.4 424.6 619.8 355.0 620.1 425.8 620.4 393.6 620.8 392.6 621.1 402.5 621.5 419.9 621.8 370.0 622.1 408.3 622.5 391.9 622.8 418.1 623.2 385.3 623.5 439.2 623.8 364.8 624.2 429.7 624.5 396.8 624.9 409.2 625.2 384.7 625.5 516.8 625.9 352.5 626.2 413.9 626.6 406.2 626.9 386.1 627.2 403.9 627.6 371.8 627.9 453.9 628.3 327.4 628.6 500.2 628.9 338.5 629.3 395.1 629.6 384.6 630.0 414.8 630.3 407.0 630.6 389.6 631.0 345.2 631.3 361.8 631.7 343.7 632.0 405.4 632.3 383.7 632.7 399.3 633.0 341.9 633.4 388.1 633.7 371.4 634.0 385.8 634.4 339.1 634.7 362.7 635.1 385.4 635.4 401.5 635.7 319.0 636.1 403.9 636.4 283.2 636.8 451.9 637.1 366.1 637.4 410.9 637.8 349.8 638.1 424.7 638.5 333.8 638.8 459.4 639.1 303.8 639.5 404.9 639.8 421.9 640.2 327.6 640.5 433.7 640.8 306.5 641.2 427.7 641.5 342.0 641.9 415.8 642.2 398.1 642.5 298.7 642.9 300.9 643.2 365.3 643.6 342.1 643.9 424.3 644.2 348.5 644.6 321.8 644.9 359.2 645.3 379.0" fill="none" stroke="#0000ff" stroke-width="1.2"/><path d="M79 247.5H87" stroke="#000" stroke-width="1"/><path d="M79 265.5H87" stroke="#000" stroke-width="1"/><path d="M79 301.5H87" stroke="#000" stroke-width="1"/><path d="M79 336.5H87" stroke="#000" stroke-width="1"/><path d="M79 372.5H87" stroke="#000" stroke-width="1"/><path d="M79 408.5H87" stroke="#000" stroke-width="1"/><path d="M79 443.5H87" stroke="#000" stroke-width="1"/><path d="M79 479.5H87" stroke="#000" stroke-width="1"/><path d="M79 514.5H87" stroke="#000" stroke-width="1"/><path d="M79 532.5H87" stroke="#000" stroke-width="1"/><path d="M87.5 534V542" stroke="#000" stroke-width="1"/><path d="M115.5 534V538" stroke="#000" stroke-width="1"/><path d="M143.5 534V542" stroke="#000" stroke-width="1"/><path d="M171.5 534V538" stroke="#000" stroke-width="1"/><path d="M199.5 534V542" stroke="#000" stroke-width="1"/><path d="M227.5 534V538" stroke="#000" stroke-width="1"/><path d="M255.5 534V542" stroke="#000" stroke-width="1"/><path d="M283.5 534V538" stroke="#000" stroke-width="1"/><path d="M311.5 534V542" stroke="#000" stroke-width="1"/><path d="M339.5 534V538" stroke="#000" stroke-width="1"/><path d="M366.5 534V542" stroke="#000" stroke-width="1"/><path d="M394.5 534V538" stroke="#000" stroke-width="1"/><path d="M422.5 534V542" stroke="#000" stroke-width="1"/><path d="M450.5 534V538" stroke="#000" stroke-width="1"/><path d="M478.5 534V542" stroke="#000" stroke-width="1"/><path d="M506.5 534V538" stroke="#000" stroke-width="1"/><path d="M534.5 534V542" stroke="#000" stroke-width="1"/><path d="M562.5 534V538" stroke="#000" stroke-width="1"/><path d="M590.5 534V542" stroke="#000" stroke-width="1"/><path d="M618.5 534V538" stroke="#000" stroke-width="1"/><path d="M646.5 534V542" stroke="#000" stroke-width="1"/></svg>
<div class="t ax" style="right:1352px;top:249px;font-size:13px">-0.101</div>
<div class="t ax" style="right:1352px;top:303px;font-size:13px">-0.104</div>
<div class="t ax" style="right:1352px;top:338px;font-size:13px">-0.106</div>
<div class="t ax" style="right:1352px;top:374px;font-size:13px">-0.108</div>
<div class="t ax" style="right:1352px;top:410px;font-size:13px">-0.11</div>
<div class="t ax" style="right:1352px;top:445px;font-size:13px">-0.112</div>
<div class="t ax" style="right:1352px;top:481px;font-size:13px">-0.114</div>
<div class="t ax" style="right:1352px;top:518px;font-size:13px">-0.117</div>
<div class="t ax" style="left:87.0px;top:548px;font-size:12.5px">0</div>
<div class="t ax" style="left:102.9px;width:80px;text-align:center;top:548px;font-size:12.5px">0.04</div>
<div class="t ax" style="left:158.8px;width:80px;text-align:center;top:548px;font-size:12.5px">0.08</div>
<div class="t ax" style="left:214.7px;width:80px;text-align:center;top:548px;font-size:12.5px">0.12</div>
<div class="t ax" style="left:270.6px;width:80px;text-align:center;top:548px;font-size:12.5px">0.16</div>
<div class="t ax" style="left:326.5px;width:80px;text-align:center;top:548px;font-size:12.5px">0.2</div>
<div class="t ax" style="left:382.4px;width:80px;text-align:center;top:548px;font-size:12.5px">0.24</div>
<div class="t ax" style="left:438.3px;width:80px;text-align:center;top:548px;font-size:12.5px">0.28</div>
<div class="t ax" style="left:494.20000000000005px;width:80px;text-align:center;top:548px;font-size:12.5px">0.32</div>
<div class="t ax" style="left:550.0999999999999px;width:80px;text-align:center;top:548px;font-size:12.5px">0.36</div>
<div class="t ax" style="right:779.0px;top:548px;font-size:12.5px">0.4</div>
<div class="t" style="left:95px;top:256px;font-size:9.3px;font-weight:bold;color:#1f30c0">x: 0.0867188, y: -0.108303 Locked</div>
<div class="t" style="left:15.5px;top:381px;font-size:11px;font-weight:bold;transform:rotate(-90deg)">g</div>
<div class="t" style="left:368px;top:561px;font-size:9.5px;font-weight:bold">Sec</div>
<div class="t" style="left:22px;top:567px;font-size:10.3px;font-weight:bold">Start Date: 11/04/20</div>
<div class="t" style="left:22px;top:583px;font-size:10.3px;font-weight:bold">Start Time: 14:36:06</div>
<div class="t ax" style="right:646px;top:248px;font-size:12.5px">0.00094</div>
<div class="t ax" style="right:646px;top:292px;font-size:12.5px">0.0002</div>
<div class="t ax" style="right:646px;top:331px;font-size:12.5px">5e-05</div>
<div class="t ax" style="right:646px;top:356px;font-size:12.5px">2e-05</div>
<div class="t ax" style="right:646px;top:395px;font-size:12.5px">5e-06</div>
<div class="t ax" style="right:646px;top:421px;font-size:12.5px">2e-06</div>
<div class="t ax" style="right:646px;top:460px;font-size:12.5px">5e-07</div>
<div class="t ax" style="right:646px;top:486px;font-size:12.5px">2e-07</div>
<div class="t ax" style="right:646px;top:519px;font-size:12.5px">3.4e-08</div>
<svg class="a" style="left:713px;top:146px" width="90" height="420"><path d="M72 100.5H80" stroke="#000"/><path d="M72 118.5H80" stroke="#000"/><path d="M72 144.5H80" stroke="#000"/><path d="M72 163.5H80" stroke="#000"/><path d="M72 183.5H80" stroke="#000"/><path d="M72 208.5H80" stroke="#000"/><path d="M72 228.5H80" stroke="#000"/><path d="M72 247.5H80" stroke="#000"/><path d="M72 273.5H80" stroke="#000"/><path d="M72 293.5H80" stroke="#000"/><path d="M72 312.5H80" stroke="#000"/><path d="M72 338.5H80" stroke="#000"/><path d="M72 357.5H80" stroke="#000"/><path d="M72 376.5H80" stroke="#000"/><path d="M72 387.5H80" stroke="#000"/><path d="M81.5 100V388" stroke="#808080"/><path d="M80.5 389V397" stroke="#000"/><path d="M81.5 100V156" stroke="#2020a0" stroke-width="2"/></svg>
<div class="t" style="left:720px;top:0px;font-size:11px;font-weight:bold;transform:rotate(-90deg);transform-origin:0 0;top:389px">g (Log)</div>
<div class="t ax" style="left:757px;width:80px;text-align:center;top:548px;font-size:12.5px">0</div>
<div class="t ax" style="left:865px;width:80px;text-align:center;top:548px;font-size:12.5px">400</div>
<div class="t ax" style="left:977px;width:80px;text-align:center;top:548px;font-size:12.5px">800</div>
<div class="t ax" style="left:1090px;width:80px;text-align:center;top:548px;font-size:12.5px">1200</div>
<div class="t ax" style="left:1202px;width:80px;text-align:center;top:548px;font-size:12.5px">1600</div>
<div class="t ax" style="left:1300px;width:80px;text-align:center;top:548px;font-size:12.5px">2000</div>
<div class="t" style="left:1074px;top:562px;font-size:9.5px;font-weight:bold">Hz</div>
<div class="t" style="left:1297px;top:570.5px;font-size:10.2px;font-weight:bold">Stop Date: __/__/__</div>
<div class="t" style="left:1297px;top:586.5px;font-size:10.2px;font-weight:bold">Stop Time: __:__:__</div>


<!-- page tab strip -->
<div class="a" style="left:1px;top:605px;width:1423px;height:1px;background:#c3cfdc"></div>
<div class="a" style="left:1px;top:606px;width:1423px;height:24px;background:linear-gradient(#e3effc,#c3dbf8 55%,#b4d0f4)"></div>
<svg class="a" style="left:1px;top:605px" width="100" height="25"><path d="M20 1H89V21Q89 23 87 23H46Q44 23 42 21Z" fill="#fff" stroke="#a5c1e4"/></svg>
<div class="t" style="left:47px;top:613px;font-size:11px;color:#15428b">Page 1</div>
<div class="a" style="left:1px;top:605px;width:2px;height:25px;background:#575757"></div>
<svg class="a" style="left:8px;top:612px" width="8" height="12"><path d="M6.5 1.5L1.5 6L6.5 10.5Z" fill="none" stroke="#7f9fc6"/></svg>
<svg class="a" style="left:1404px;top:612px" width="8" height="12"><path d="M1.5 1.5L6.5 6L1.5 10.5Z" fill="none" stroke="#7f9fc6"/></svg>
<div class="a" style="left:1px;top:630px;width:1423px;height:3px;background:#e8f1fc"></div>
<div class="a" style="left:1px;top:633px;width:1423px;height:4px;background:#c5daf4"></div>


<!-- log -->
<div class="a" style="left:1px;top:637px;width:1423px;height:19px;background:#bad0ea"></div>
<div class="t" style="left:5px;top:641px;font-size:11.5px;color:#1f4f8f">Log</div>
<svg class="a" style="left:1392px;top:639px" width="30" height="14"><path d="M4.5 2.5H10.5M5.5 2.5V8.5H9.5V2.5M3.5 8.5H11.5M7.5 8.5V12" fill="none" stroke="#3a5a8a" stroke-width="1.1"/><path d="M18.5 2.5L26.5 10.5M26.5 2.5L18.5 10.5" stroke="#3a5a8a" stroke-width="1.3"/></svg>
<div class="a" style="left:1px;top:656px;width:1423px;height:58px;background:#fff"></div>
<div class="t" style="left:59px;top:662px;font-family:'Liberation Mono',monospace;font-size:10px;color:#000">- Averaging: Linear of 1, Max Records: 1, Overlap: 0%</div>
<div class="t" style="left:59px;top:675px;font-family:'Liberation Mono',monospace;font-size:10px;color:#000">- Gating Off</div>
<div class="t" style="left:59px;top:688px;font-family:'Liberation Mono',monospace;font-size:10px;color:#000">- Online On</div>
<div class="t" style="left:59px;top:701px;font-family:'Liberation Mono',monospace;font-size:10px;color:#000">- Device: Output Synchronized</div>
<div class="a" style="left:1406px;top:660px;width:15px;height:53px;background:#f0f0f0"></div>
<div class="a" style="left:1406px;top:680px;width:15px;height:17px;background:#cdcdcd"></div>
<svg class="a" style="left:1406px;top:660px" width="15" height="53"><path d="M4 9L7.5 5.5L11 9M4 44L7.5 47.5L11 44" fill="none" stroke="#606060" stroke-width="1.3"/></svg>
<div class="a" style="left:1px;top:714px;width:1423px;height:22px;background:linear-gradient(#8eabd3 0,#a6bfe2 8%,#a3bce0 60%,#96b2da 95%,#7390bd 100%)"></div>
<div class="a" style="left:4px;top:717px;width:13px;height:13px;background:#d4e1f2"></div>
<div class="a" style="left:20px;top:717px;width:13px;height:13px;background:#d4e1f2"></div>
<div class="a" style="left:36px;top:717px;width:13px;height:13px;background:#d4e1f2"></div>
<div class="a" style="left:52px;top:717px;width:13px;height:13px;background:#d4e1f2"></div>
<svg class="a" style="left:4px;top:717px" width="64" height="13"><g fill="#6f8db9"><path d="M3 3h1v7H3zM10 3v7L5 6.5z"/><path d="M25 3v7l-4-3.5z"/><path d="M39 3v7l4-3.5z"/><path d="M54 3v7l4-3.5zM59 3h1v7h-1z"/></g></svg>
<svg class="a" style="left:68px;top:714px" width="70" height="20"><path d="M0 0H60L44 18H4Q2 18 2 16Z" fill="#fff"/></svg>
<svg class="a" style="left:68px;top:714px" width="70" height="20"><path d="M0 0H62L46 18H4Q2 18 2 16Z" fill="url(#gs)"/><defs><linearGradient id="gs" x1="0" y1="0" x2="0" y2="1"><stop offset="0" stop-color="#ffffff"/><stop offset="1" stop-color="#e3ecf7"/></linearGradient></defs></svg>
<div class="t" style="left:76px;top:719px;font-size:11px;font-weight:bold;color:#000">System</div>
<div class="a" style="left:1px;top:736px;width:1423px;height:23px;background:linear-gradient(#dfeafa,#c6d9f1 50%,#bcd3ef)"></div>
<div class="t" style="left:3px;top:742px;font-size:11.5px;color:#15428b">Device: Output Synchronized</div>
<div class="a" style="left:1300px;top:736px;width:124px;height:23px;background:linear-gradient(#c3dbf8 0%,#a9c8f0 30%,#8fb3e6 60%,#80a8de 100%);border-left:1px solid #7e99c2"></div>
<div class="t" style="left:1317px;top:742px;font-size:11.5px;color:#15428b">Online</div>
<svg class="a" style="left:1410px;top:746px" width="14" height="13"><g fill="#fff"><rect x="10" y="2" width="2" height="2"/><rect x="7" y="5" width="2" height="2"/><rect x="10" y="5" width="2" height="2"/><rect x="4" y="8" width="2" height="2"/><rect x="7" y="8" width="2" height="2"/><rect x="10" y="8" width="2" height="2"/></g><g fill="#4f6e9c"><rect x="9" y="1" width="2" height="2"/><rect x="6" y="4" width="2" height="2"/><rect x="9" y="4" width="2" height="2"/><rect x="3" y="7" width="2" height="2"/><rect x="6" y="7" width="2" height="2"/><rect x="9" y="7" width="2" height="2"/></g></svg>
<div class="a" style="left:1px;top:759px;width:1425px;height:1px;background:#fff"></div>


<!-- custom status -->
<div class="a" style="left:795px;top:21px;width:599px;height:525px;background:#cfdff2;border:1px solid #c3ccd8"></div>
<div class="a" style="left:796px;top:22px;width:597px;height:523px;border-left:1px solid #f5f8fc;border-top:1px solid #f5f8fc"></div>
<div class="a" style="left:797px;top:23px;width:595px;height:25px;background:linear-gradient(#e9f0f9,#e3ecf8)"></div>
<div class="t" style="left:801px;top:32px;font-size:11px;font-weight:bold;color:#15428b">Custom Status</div>
<svg class="a" style="left:1377px;top:32px" width="11" height="10"><path d="M1.5 1L9.5 9M9.5 1L1.5 9" stroke="#2a4a7a" stroke-width="1.3"/></svg>
<div class="a" style="left:798px;top:48px;width:593px;height:22px;background:#bfdbff"></div>
<div class="t cs-hdr" style="left:799px;top:48px;width:295px">CH 1, g RMS</div><div class="t cs-hdr" style="left:1094px;top:48px;width:297px">CH 1, g RMS</div><div class="a" style="left:798px;top:294px;width:593px;height:22px;background:#bfdbff"></div>
<div class="t cs-hdr" style="left:799px;top:294px;width:295px">CH 1, g RMS</div><div class="t cs-hdr" style="left:1094px;top:294px;width:297px">CH 1, g RMS</div><div class="a" style="left:800px;top:70px;width:293px;height:224px;background:#fff"></div>
<div class="a" style="left:1094px;top:70px;width:297px;height:224px;background:#fff"></div>
<div class="a" style="left:800px;top:317px;width:293px;height:225px;background:#fff"></div>
<div class="a" style="left:1094px;top:317px;width:297px;height:225px;background:#fff"></div>
<svg class="a" style="left:800px;top:70px" width="293" height="225"><path d="M0 13.5H293" stroke="#bcd3ee"/><path d="M0 28.5H293" stroke="#bcd3ee"/><path d="M0 52.5H293" stroke="#bcd3ee"/><path d="M0 76.5H293" stroke="#bcd3ee"/><rect x="1.0" y="59.7" width="17.5" height="149.3" fill="#5b3f9c"/><rect x="20.5" y="46.8" width="17.5" height="162.2" fill="#5b3f9c"/><rect x="40.1" y="20.0" width="17.5" height="189.0" fill="#5b3f9c"/><rect x="59.6" y="46.8" width="17.5" height="162.2" fill="#5b3f9c"/><rect x="79.1" y="67.8" width="17.5" height="141.2" fill="#5b3f9c"/><rect x="98.7" y="76.0" width="17.5" height="133.0" fill="#5b3f9c"/><rect x="118.2" y="82.5" width="17.5" height="126.5" fill="#5b3f9c"/><rect x="137.7" y="77.0" width="17.5" height="132.0" fill="#5b3f9c"/><rect x="157.2" y="85.5" width="17.5" height="123.5" fill="#5b3f9c"/><rect x="176.8" y="64.9" width="17.5" height="144.1" fill="#5b3f9c"/><rect x="196.3" y="74.8" width="17.5" height="134.2" fill="#5b3f9c"/><rect x="215.8" y="35.8" width="17.5" height="173.2" fill="#5b3f9c"/><rect x="235.4" y="14.8" width="17.5" height="194.2" fill="#5b3f9c"/><rect x="254.9" y="18.5" width="17.5" height="190.5" fill="#5b3f9c"/><rect x="274.4" y="25.8" width="17.5" height="183.2" fill="#5b3f9c"/><path d="M0 209.5H293" stroke="#bcd3ee"/></svg>
<div class="t" style="left:804px;top:72px;font-size:10.5px;color:#5b4a9b">0.0025</div>
<div class="t" style="left:1056px;top:72px;font-size:10.5px;color:#5b4a9b">0.0023</div>
<div class="t" style="left:804px;top:283px;font-size:10.5px;color:#5b4a9b">0.00</div>
<div class="t" style="left:1142px;top:143px;font-size:87px;color:#5b3f9c;letter-spacing:-1.6px;transform:scaleX(0.95);transform-origin:0 0;-webkit-text-stroke:0.4px #5b3f9c">0.002</div>
<svg class="a" style="left:800px;top:317px" width="293" height="225"><g transform="translate(146,112)"><path d="M-45.0 98.7A108.5 108.5 0 1 1 48.4 97.1L25.0 50.1A56 56 0 1 0 -23.2 51.0Z" fill="#5a6594"/><path d="M-38.9 72.2A82 82 0 1 1 43.1 69.8" fill="none" stroke="#e8ebf5" stroke-width="1.2"/><path d="M-38.9 72.2L-27.0 50.2" stroke="#e8ebf5" stroke-width="1.2"/><text x="-45.0" y="87.6" font-size="10.5" fill="#e8ebf5" text-anchor="middle" font-family="Liberation Sans">0</text><path d="M-51.6 63.7L-44.1 54.4" stroke="#e8ebf5" stroke-width="1.2"/><path d="M-62.6 53.0L-48.8 41.4" stroke="#e8ebf5" stroke-width="1.2"/><text x="-72.5" y="65.4" font-size="10.5" fill="#e8ebf5" text-anchor="middle" font-family="Liberation Sans">2</text><path d="M-71.3 40.4L-60.9 34.5" stroke="#e8ebf5" stroke-width="1.2"/><path d="M-77.6 26.5L-60.6 20.7" stroke="#e8ebf5" stroke-width="1.2"/><text x="-89.9" y="34.7" font-size="10.5" fill="#e8ebf5" text-anchor="middle" font-family="Liberation Sans">4</text><path d="M-81.2 11.6L-69.3 9.9" stroke="#e8ebf5" stroke-width="1.2"/><path d="M-81.9 -3.7L-63.9 -2.9" stroke="#e8ebf5" stroke-width="1.2"/><text x="-94.9" y="-0.3" font-size="10.5" fill="#e8ebf5" text-anchor="middle" font-family="Liberation Sans">6</text><path d="M-79.8 -18.9L-68.1 -16.1" stroke="#e8ebf5" stroke-width="1.2"/><path d="M-74.9 -33.4L-58.5 -26.0" stroke="#e8ebf5" stroke-width="1.2"/><text x="-86.8" y="-34.7" font-size="10.5" fill="#e8ebf5" text-anchor="middle" font-family="Liberation Sans">8</text><path d="M-67.4 -46.7L-57.5 -39.9" stroke="#e8ebf5" stroke-width="1.2"/><path d="M-57.5 -58.4L-44.9 -45.6" stroke="#e8ebf5" stroke-width="1.2"/><text x="-66.7" y="-63.7" font-size="10.5" fill="#e8ebf5" text-anchor="middle" font-family="Liberation Sans">10</text><path d="M-45.7 -68.1L-39.0 -58.1" stroke="#e8ebf5" stroke-width="1.2"/><path d="M-32.2 -75.4L-25.1 -58.9" stroke="#e8ebf5" stroke-width="1.2"/><text x="-37.3" y="-83.4" font-size="10.5" fill="#e8ebf5" text-anchor="middle" font-family="Liberation Sans">12</text><path d="M-17.6 -80.1L-15.0 -68.4" stroke="#e8ebf5" stroke-width="1.2"/><path d="M-2.4 -82.0L-1.9 -64.0" stroke="#e8ebf5" stroke-width="1.2"/><text x="-2.8" y="-91.0" font-size="10.5" fill="#e8ebf5" text-anchor="middle" font-family="Liberation Sans">14</text><path d="M12.8 -81.0L11.0 -69.1" stroke="#e8ebf5" stroke-width="1.2"/><path d="M27.7 -77.2L21.6 -60.2" stroke="#e8ebf5" stroke-width="1.2"/><text x="32.1" y="-85.4" font-size="10.5" fill="#e8ebf5" text-anchor="middle" font-family="Liberation Sans">16</text><path d="M41.5 -70.7L35.5 -60.3" stroke="#e8ebf5" stroke-width="1.2"/><path d="M54.0 -61.7L42.1 -48.2" stroke="#e8ebf5" stroke-width="1.2"/><text x="62.5" y="-67.5" font-size="10.5" fill="#e8ebf5" text-anchor="middle" font-family="Liberation Sans">18</text><path d="M64.5 -50.6L55.1 -43.2" stroke="#e8ebf5" stroke-width="1.2"/><path d="M72.8 -37.8L56.8 -29.5" stroke="#e8ebf5" stroke-width="1.2"/><text x="84.3" y="-39.7" font-size="10.5" fill="#e8ebf5" text-anchor="middle" font-family="Liberation Sans">20</text><path d="M78.5 -23.6L67.0 -20.1" stroke="#e8ebf5" stroke-width="1.2"/><path d="M81.6 -8.6L63.7 -6.7" stroke="#e8ebf5" stroke-width="1.2"/><text x="94.5" y="-5.9" font-size="10.5" fill="#e8ebf5" text-anchor="middle" font-family="Liberation Sans">22</text><path d="M81.7 6.8L69.8 5.8" stroke="#e8ebf5" stroke-width="1.2"/><path d="M79.0 21.8L61.7 17.0" stroke="#e8ebf5" stroke-width="1.2"/><text x="91.6" y="29.3" font-size="10.5" fill="#e8ebf5" text-anchor="middle" font-family="Liberation Sans">24</text><path d="M73.6 36.1L62.8 30.9" stroke="#e8ebf5" stroke-width="1.2"/><path d="M65.6 49.2L51.2 38.4" stroke="#e8ebf5" stroke-width="1.2"/><text x="76.0" y="61.0" font-size="10.5" fill="#e8ebf5" text-anchor="middle" font-family="Liberation Sans">26</text><path d="M55.3 60.5L47.2 51.7" stroke="#e8ebf5" stroke-width="1.2"/><path d="M43.1 69.8L33.6 54.5" stroke="#e8ebf5" stroke-width="1.2"/><text x="49.9" y="84.8" font-size="10.5" fill="#e8ebf5" text-anchor="middle" font-family="Liberation Sans">28</text><circle cx="0" cy="0" r="12" fill="#5a6594"/><path d="M-6 -1.2L81.5 10.5" stroke="#4b3a8c" stroke-width="2"/><text x="0" y="87" font-size="10.5" fill="#5b4a9b" text-anchor="middle" font-family="Liberation Sans">x0.0001</text></g></svg>
<svg class="a" style="left:1094px;top:317px" width="297" height="225"><path d="M0 14.5H297" stroke="#bcd3ee"/><path d="M0 24.5H297" stroke="#bcd3ee"/><path d="M0 44.5H297" stroke="#bcd3ee"/><path d="M0 64.5H297" stroke="#bcd3ee"/><path d="M0 85.5H297" stroke="#bcd3ee"/><path d="M1.5 95V209M2.5 95V209M3.5 87V209M4.5 91V209M5.5 82V209M6.5 79V209M7.5 90V209M8.5 100V209M9.5 100V209M10.5 82V209M11.5 100V209M12.5 92V209M13.5 71V209M14.5 99V209M15.5 99V209M16.5 97V209M17.5 81V209M18.5 92V209M19.5 97V209M20.5 82V209M21.5 98V209M22.5 97V209M23.5 98V209M24.5 74V209M25.5 93V209M26.5 81V209M27.5 92V209M28.5 75V209M29.5 98V209M30.5 94V209M31.5 98V209M32.5 97V209M33.5 95V209M34.5 96V209M35.5 80V209M36.5 98V209M37.5 97V209M38.5 98V209M39.5 93V209M40.5 80V209M41.5 76V209M42.5 100V209M43.5 97V209M44.5 98V209M45.5 75V209M46.5 86V209M47.5 99V209M48.5 98V209M49.5 83V209M50.5 75V209M51.5 99V209M52.5 96V209M53.5 95V209M54.5 99V209M55.5 48V209M56.5 55V209M57.5 94V209M58.5 74V209M59.5 99V209M60.5 53V209M61.5 99V209M62.5 94V209M63.5 83V209M64.5 95V209M65.5 98V209M66.5 97V209M67.5 99V209M68.5 83V209M69.5 92V209M70.5 98V209M71.5 96V209M72.5 95V209M73.5 95V209M74.5 93V209M75.5 90V209M76.5 98V209M77.5 96V209M78.5 93V209M79.5 97V209M80.5 76V209M81.5 34V209M82.5 97V209M83.5 89V209M84.5 33V209M85.5 98V209M86.5 81V209M87.5 90V209M88.5 91V209M89.5 59V209M90.5 99V209M91.5 88V209M92.5 80V209M93.5 71V209M94.5 95V209M95.5 60V209M96.5 97V209M97.5 98V209M98.5 96V209M99.5 98V209M100.5 98V209M101.5 89V209M102.5 54V209M103.5 98V209M104.5 99V209M105.5 96V209M106.5 63V209M107.5 99V209M108.5 52V209M109.5 73V209M110.5 97V209M111.5 96V209M112.5 98V209M113.5 83V209M114.5 43V209M115.5 84V209M116.5 71V209M117.5 92V209M118.5 96V209M119.5 98V209M120.5 94V209M121.5 76V209M122.5 61V209M123.5 98V209M124.5 96V209M125.5 95V209M126.5 86V209M127.5 91V209M128.5 97V209M129.5 33V209M130.5 99V209M131.5 96V209M132.5 65V209M133.5 79V209M134.5 78V209M135.5 80V209M136.5 95V209M137.5 96V209M138.5 96V209M139.5 98V209M140.5 97V209M141.5 97V209M142.5 98V209M143.5 99V209M144.5 98V209M145.5 74V209M146.5 84V209M147.5 84V209M148.5 97V209M149.5 47V209M150.5 95V209M151.5 74V209M152.5 84V209M153.5 87V209M154.5 55V209M155.5 66V209M156.5 99V209M157.5 96V209M158.5 95V209M159.5 80V209M160.5 80V209M161.5 86V209M162.5 99V209M163.5 96V209M164.5 77V209M165.5 97V209M166.5 78V209M167.5 96V209M168.5 82V209M169.5 97V209M170.5 98V209M171.5 99V209M172.5 97V209M173.5 98V209M174.5 70V209M175.5 65V209M176.5 75V209M177.5 28V209M178.5 93V209M179.5 95V209M180.5 72V209M181.5 76V209M182.5 99V209M183.5 99V209M184.5 99V209M185.5 96V209M186.5 89V209M187.5 55V209M188.5 87V209M189.5 90V209M190.5 97V209M191.5 47V209M192.5 97V209M193.5 97V209M194.5 79V209M195.5 95V209M196.5 81V209M197.5 78V209M198.5 90V209M199.5 86V209M200.5 66V209M201.5 69V209M202.5 83V209M203.5 83V209M204.5 77V209M205.5 71V209M206.5 81V209M207.5 76V209M208.5 84V209M209.5 67V209M210.5 73V209M211.5 29V209M212.5 78V209M213.5 82V209M214.5 25V209M215.5 67V209M216.5 82V209M217.5 73V209M218.5 79V209M219.5 42V209M220.5 82V209M221.5 16V209M222.5 75V209M223.5 82V209M224.5 81V209M225.5 73V209M226.5 68V209M227.5 63V209M228.5 73V209M229.5 69V209M230.5 38V209M231.5 73V209M232.5 78V209M233.5 77V209M234.5 78V209M235.5 74V209M236.5 60V209M237.5 71V209M238.5 62V209M239.5 79V209M240.5 78V209M241.5 67V209M242.5 79V209M243.5 62V209M244.5 47V209M245.5 73V209M246.5 78V209M247.5 57V209M248.5 16V209M249.5 34V209M250.5 75V209M251.5 73V209M252.5 75V209M253.5 66V209M254.5 55V209M255.5 74V209M256.5 59V209M257.5 39V209M258.5 65V209M259.5 70V209M260.5 61V209M261.5 72V209M262.5 61V209M263.5 50V209M264.5 69V209M265.5 53V209M266.5 72V209M267.5 32V209M268.5 66V209M269.5 45V209M270.5 68V209M271.5 41V209M272.5 62V209M273.5 69V209M274.5 25V209M275.5 69V209M276.5 65V209M277.5 30V209M278.5 71V209M279.5 65V209M280.5 40V209M281.5 33V209M282.5 55V209M283.5 73V209M284.5 78V209M285.5 77V209M286.5 79V209M287.5 81V209M288.5 82V209M289.5 83V209M290.5 51V209M291.5 82V209M292.5 83V209M293.5 55V209M294.5 82V209" stroke="#5b3f9c" stroke-width="1"/><path d="M0 209.5H297" stroke="#bcd3ee"/></svg>
<div class="t" style="left:1099px;top:320px;font-size:10.5px;color:#5b4a9b">0.003</div>
<div class="t" style="left:1359px;top:320px;font-size:10.5px;color:#5b4a9b">0.002</div>
<div class="t" style="left:1099px;top:529px;font-size:10.5px;color:#5b4a9b">0.000</div>


<div class="a" style="left:1424px;top:0;width:2px;height:760px;background:#fff"></div>
</body></html>
